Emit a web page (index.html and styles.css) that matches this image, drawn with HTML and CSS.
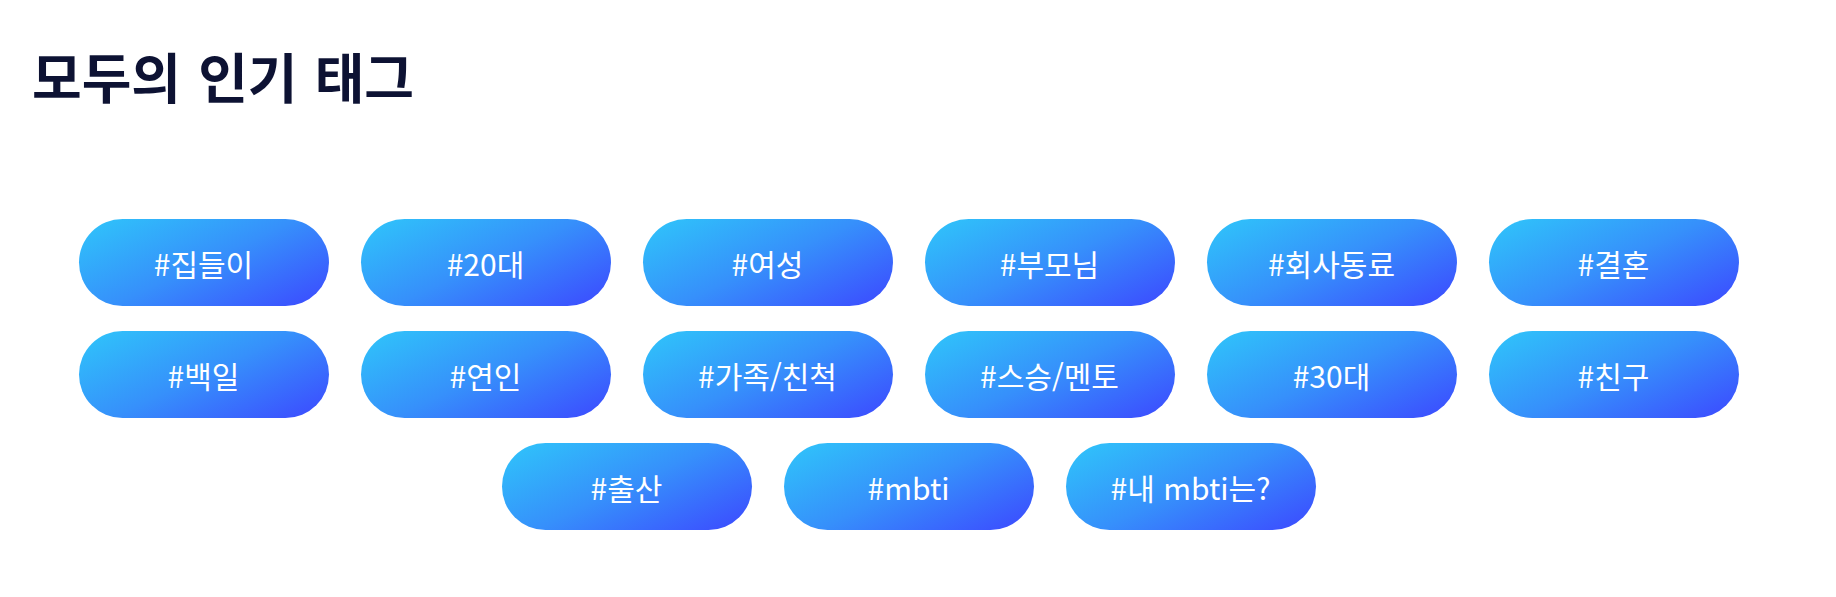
FILE: index.html
```html
<!DOCTYPE html>
<html lang="ko">
<head>
<meta charset="utf-8">
<title>모두의 인기 태그</title>
<link rel="stylesheet" href="styles.css">
</head>
<body>
<section class="popular">
  <h2 class="popular-title">모두의 인기 태그</h2>
  <ul class="tag-list">
    <li class="tag">#집들이</li>
    <li class="tag">#20대</li>
    <li class="tag">#여성</li>
    <li class="tag">#부모님</li>
    <li class="tag">#회사동료</li>
    <li class="tag">#결혼</li>
    <li class="tag">#백일</li>
    <li class="tag">#연인</li>
    <li class="tag">#가족/친척</li>
    <li class="tag">#스승/멘토</li>
    <li class="tag">#30대</li>
    <li class="tag">#친구</li>
    <li class="tag">#출산</li>
    <li class="tag">#mbti</li>
    <li class="tag">#내 mbti는?</li>
  </ul>
</section>
</body>
</html>
```
FILE: styles.css
```css
* { box-sizing: border-box; }
html, body { margin: 0; padding: 0; background: #ffffff; }
body {
  font-family: "Noto Sans CJK KR", "Noto Sans", sans-serif;
}
.popular {
  padding: 41px 0 0 0;
}
.popular-title {
  margin: 0 0 0 32px;
  font-size: 54px;
  line-height: 70px;
  font-weight: 700;
  color: #0d1233;
  word-spacing: 2px;
}
.tag-list {
  list-style: none;
  margin: 108px 0 0 0;
  padding: 0 19px 0 0;
  display: flex;
  flex-wrap: wrap;
  justify-content: center;
  gap: 25px 32px;
}
.tag {
  width: 250px;
  height: 87px;
  border-radius: 44px;
  background: linear-gradient(155deg, #2fc6fa 0%, #3690fb 50%, #3c48ff 100%);
  color: #ffffff;
  font-size: 30px;
  font-weight: 400;
  display: flex;
  align-items: center;
  justify-content: center;
}
```
